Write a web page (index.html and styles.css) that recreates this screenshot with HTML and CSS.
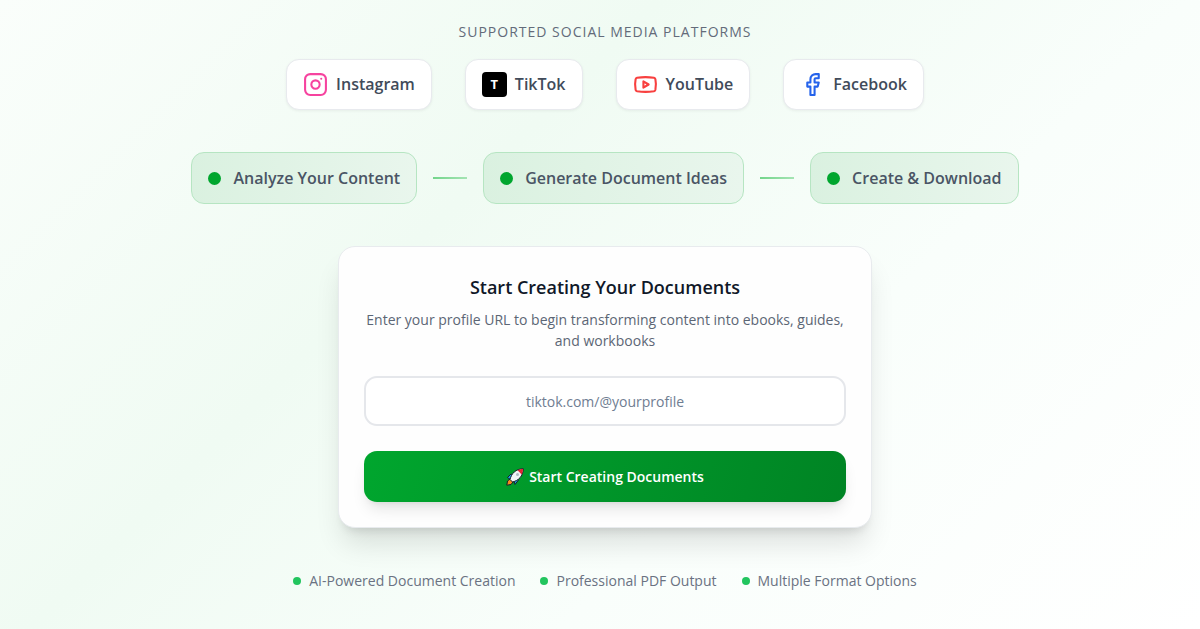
FILE: index.html
```html
<!DOCTYPE html>
<html lang="en">
<head>
  <meta charset="UTF-8">
  <meta name="viewport" content="width=device-width, initial-scale=1.0">
  <title>Start Creating Your Documents</title>
  <link rel="stylesheet" href="styles.css">
</head>
<body>
  <main class="page">
    <section class="platforms">
      <h2 class="platforms-title">Supported Social Media Platforms</h2>
      <ul class="platform-list">
        <li class="platform">
          <svg class="icon instagram" viewBox="0 0 24 24" aria-hidden="true">
            <rect x="2" y="2" width="20" height="20" rx="5"/>
            <circle cx="12" cy="12" r="4"/>
            <path d="M17.5 6.5h.01"/>
          </svg>
          Instagram
        </li>
        <li class="platform">
          <span class="tiktok-logo" aria-hidden="true">T</span>
          TikTok
        </li>
        <li class="platform">
          <svg class="icon youtube" viewBox="0 0 24 24" aria-hidden="true">
            <path d="M2.5 17a24.12 24.12 0 0 1 0-10 2 2 0 0 1 1.4-1.4 49.56 49.56 0 0 1 16.2 0A2 2 0 0 1 21.5 7a24.12 24.12 0 0 1 0 10 2 2 0 0 1-1.4 1.4 49.55 49.55 0 0 1-16.2 0A2 2 0 0 1 2.5 17"/>
            <path d="m10 15 5-3-5-3z"/>
          </svg>
          YouTube
        </li>
        <li class="platform">
          <svg class="icon facebook" viewBox="0 0 24 24" aria-hidden="true">
            <path d="M18 2h-3a5 5 0 0 0-5 5v3H7v4h3v8h4v-8h3l1-4h-4V7a1 1 0 0 1 1-1h3z"/>
          </svg>
          Facebook
        </li>
      </ul>
    </section>

    <section class="flow">
      <div class="flow-step"><span class="flow-dot"></span>Analyze Your Content</div>
      <span class="flow-line"></span>
      <div class="flow-step"><span class="flow-dot"></span>Generate Document Ideas</div>
      <span class="flow-line"></span>
      <div class="flow-step"><span class="flow-dot"></span>Create &amp; Download</div>
    </section>

    <form class="card">
      <h1>Start Creating Your Documents</h1>
      <p class="card-text">Enter your profile URL to begin transforming content into ebooks, guides, and workbooks</p>
      <input type="text" class="url-input" placeholder="tiktok.com/@yourprofile" aria-label="Profile URL">
      <button type="button" class="start-button">
        <svg class="rocket" viewBox="0 0 18 18" aria-hidden="true">
          <path d="M1.5 9.5 5 6 9 8 5 12z" fill="#1da1e8" stroke="#16202a"/>
          <path d="M8 13 10.5 9 12.5 12 9 16.5z" fill="#1da1e8" stroke="#16202a"/>
          <path d="M4 11 1.5 13 .8 17.2 5 16.500 7 14z" fill="#f58a1f" stroke="#16202a"/>
          <path d="M4 11.500C5.500 5.500 9.500 1 17.300.7 17 8.500 12.500 12.500 6.500 14z" fill="#f2f4f6" stroke="#16202a"/>
          <path d="M11.500 2.300C13.300 1.400 15 1.100 17 1 16.900 3 16.600 4.700 15.700 6.500z" fill="#e22434"/>
          <circle cx="11.500" cy="6.500" r="1.500" fill="#aebbc5"/>
        </svg>
        Start Creating Documents
      </button>
    </form>

    <ul class="features">
      <li>AI-Powered Document Creation</li>
      <li>Professional PDF Output</li>
      <li>Multiple Format Options</li>
    </ul>
  </main>
</body>
</html>
```
FILE: styles.css
```css
* {
  box-sizing: border-box;
}

body {
  margin: 0;
  min-height: 100vh;
  font-family: 'Segoe UI', 'Open Sans', 'Noto Sans', sans-serif;
  color: #1e2939;
  background: linear-gradient(135deg, #fafefb 0%, #f0fbf3 36%, #f9fefb 65%, #fff 100%);
}

.page {
  display: flex;
  flex-direction: column;
  align-items: center;
  gap: 42px;
  padding: 22px 0 22px 10px;
}

h1, h2, p, ul {
  margin: 0;
  padding: 0;
}

ul {
  list-style: none;
}

.platforms {
  display: flex;
  flex-direction: column;
  align-items: center;
  gap: 17px;
}

.platforms-title {
  font-size: 14px;
  line-height: 20px;
  font-weight: 500;
  letter-spacing: 1px;
  text-transform: uppercase;
  color: #636b7a;
}

.platform-list {
  display: flex;
  gap: 33px;
}

.platform {
  display: flex;
  align-items: center;
  gap: 8px;
  padding: 12px 16px;
  border: 1px solid #e8eaee;
  border-radius: 13px;
  background-color: #fff;
  box-shadow: 0 1px 3px rgba(0, 0, 0, 0.06);
  font-size: 16px;
  line-height: 25px;
  font-weight: 600;
  color: #414b5a;
}

.icon {
  width: 25px;
  height: 25px;
  fill: none;
  stroke-width: 2;
  stroke-linecap: round;
  stroke-linejoin: round;
}

.instagram {
  stroke: #f6439f;
}

.youtube {
  stroke: #f8403f;
}

.facebook {
  stroke: #2563eb;
}

.tiktok-logo {
  width: 25px;
  height: 25px;
  border-radius: 4px;
  background-color: #000;
  color: #fff;
  font-size: 13px;
  font-weight: 700;
  text-align: center;
}

.flow {
  display: flex;
  align-items: center;
  gap: 16px;
}

.flow-step {
  display: flex;
  align-items: center;
  gap: 12px;
  padding: 12px 16px;
  border: 1px solid #b6e5c2;
  border-radius: 13px;
  background: linear-gradient(90deg, #daf1e0, #e9f6ed);
  font-size: 16px;
  line-height: 26px;
  font-weight: 600;
  color: #4a5565;
}

.flow-dot {
  width: 13px;
  height: 13px;
  border-radius: 50%;
  background-color: #00a62e;
}

.flow-line {
  width: 34px;
  height: 2px;
  background: linear-gradient(90deg, #73d58b, #a5e4b4);
}

.card {
  width: 100%;
  max-width: 534px;
  padding: 26px 25px 25px;
  border: 1px solid #e8ebee;
  border-radius: 17px;
  background-color: #fefefe;
  box-shadow: 0 20px 28px -5px rgba(0, 0, 0, 0.12), 0 8px 10px -6px rgba(0, 0, 0, 0.12);
  text-align: center;
}

.card h1 {
  font-size: 18px;
  line-height: 28px;
  font-weight: 600;
  color: #101828;
}

.card-text {
  margin: 8px 0 25px;
  font-size: 14px;
  line-height: 21px;
  color: #5c6675;
}

.url-input {
  display: block;
  width: 100%;
  height: 50px;
  padding: 0 16px;
  border: 2px solid #e5e7eb;
  border-radius: 13px;
  background-color: #fff;
  font-family: inherit;
  font-size: 14px;
  text-align: center;
}

.url-input::placeholder {
  color: #6f7d92;
}

.start-button {
  display: flex;
  align-items: center;
  justify-content: center;
  gap: 5px;
  width: 100%;
  height: 51px;
  margin-top: 25px;
  border: none;
  border-radius: 13px;
  background: linear-gradient(105deg, #00a62e, #008424);
  box-shadow: 0 10px 15px -3px rgba(0, 0, 0, 0.1), 0 4px 6px -4px rgba(0, 0, 0, 0.1);
  color: #fff;
  font-family: inherit;
  font-size: 14px;
  font-weight: 600;
  cursor: pointer;
}

.rocket {
  width: 18px;
  height: 18px;
}

.features {
  display: flex;
  gap: 25px;
  font-size: 14px;
  line-height: 21px;
  color: #6a7282;
}

.features li {
  display: flex;
  align-items: center;
  gap: 8px;
}

.features li::before {
  content: "";
  width: 8px;
  height: 8px;
  border-radius: 50%;
  background-color: #22c55e;
}
```
